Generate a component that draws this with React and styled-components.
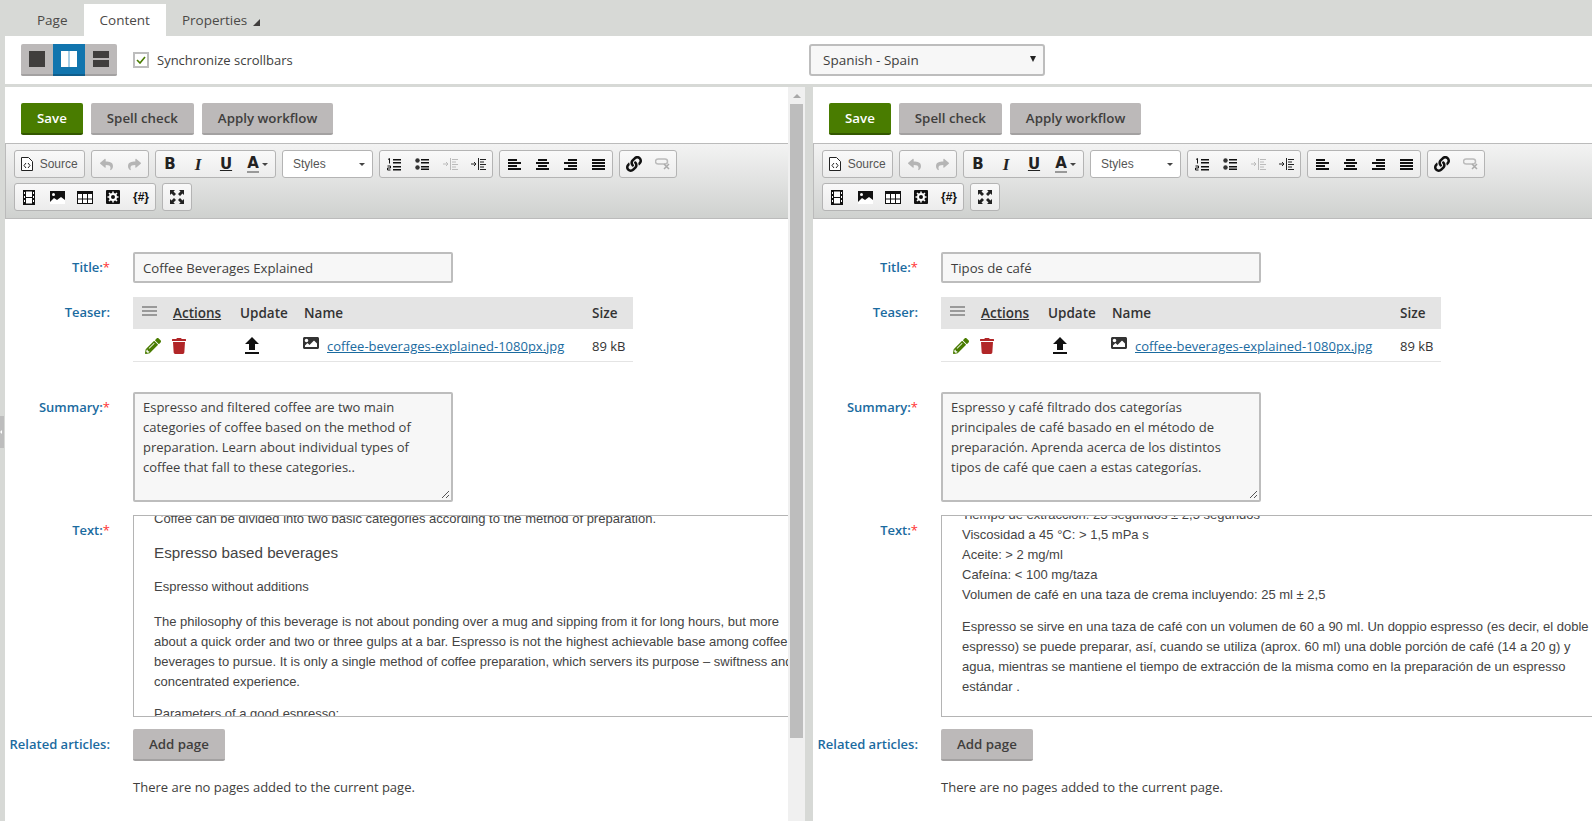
import React from 'react';
import styled, { createGlobalStyle } from 'styled-components';
import { FaPencilAlt, FaTrash, FaImage, FaReply, FaShare, FaLink } from 'react-icons/fa';
import { MdFileUpload } from 'react-icons/md';

const GlobalStyle = createGlobalStyle`
    html, body {
        margin: 0;
        height: 100%;
        overflow: hidden;
        background: #d7d9d6;
    }
    body {
        font-family: "Open Sans", "Liberation Sans", sans-serif;
        font-size: 13px;
        color: #403e3d;
    }
`

const Page = styled.div`
    width: 1592px;
    height: 821px;
    display: flex;
    flex-direction: column;
    overflow: hidden;
    position: relative;
`

const TabBar = styled.div`
    height: 32px;
    padding: 4px 0 0 21px;
    display: flex;
`

const Tab = styled.div`
    height: 32px;
    padding: 0 16px;
    display: flex;
    align-items: center;
    gap: 6px;
    font-size: 13.5px;
    background: ${p => (p.$active ? '#fff' : 'transparent')};
    color: #4b4947;
`

const TabCaret = styled.span`
    width: 0;
    height: 0;
    margin-top: 4px;
    border-left: 7px solid transparent;
    border-bottom: 7px solid #403e3d;
`

const ViewBar = styled.div`
    height: 48px;
    margin-left: 5px;
    background: #fff;
    display: flex;
    align-items: center;
    padding-left: 16px;
`

const ViewToggle = styled.div`
    width: 96px;
    height: 32px;
    display: flex;
    border-radius: 2px;
    overflow: hidden;
`

const ViewButton = styled.div`
    flex: 1;
    display: flex;
    align-items: center;
    justify-content: center;
    background: ${p => (p.$active ? '#1175ae' : '#bcb9b9')};
    border-bottom: 2px solid ${p => (p.$active ? '#0f5d8b' : '#a3a1a1')};
`

const ViewCheck = styled.label`
    display: flex;
    align-items: center;
    margin-left: 16px;
    width: 676px;
`

const CheckBox = styled.span`
    width: 12px;
    height: 12px;
    border: 2px solid #bdbdbd;
    margin-right: 8px;
    display: flex;
    align-items: center;
    justify-content: center;
`

const LanguageSelect = styled.div`
    width: 232px;
    height: 28px;
    border: 2px solid #bdbdbd;
    border-radius: 3px;
    background: #f7f7f7;
    display: flex;
    align-items: center;
    justify-content: space-between;
    font-size: 13.5px;
`

const SelectText = styled.span`
    margin-left: 12px;
`

const SelectCaret = styled.span`
    width: 0;
    height: 0;
    margin: -2px 7px 0 0;
    border-left: 3.5px solid transparent;
    border-right: 3.5px solid transparent;
    border-top: 6px solid #222;
`

const Main = styled.div`
    margin-top: 3px;
    margin-left: 5px;
    flex: 1;
    display: flex;
    min-height: 0;
`

const Panel = styled.div`
    width: ${p => p.$width}px;
    background: #fff;
    overflow: hidden;
    flex: none;
`

const ActionBar = styled.div`
    display: flex;
    gap: 8px;
    padding: 16px 0 8px 16px;
`

const Button = styled.div`
    height: 30px;
    padding: 0 16px;
    display: inline-flex;
    align-items: center;
    border-radius: 2px;
    font-size: 13.3px;
    font-weight: 600;
    background: ${p => (p.$primary ? '#497c00' : '#bcb9b9')};
    border-bottom: 2px solid ${p => (p.$primary ? '#335700' : '#a3a1a1')};
    color: ${p => (p.$primary ? '#fff' : '#403e3d')};
`

const Toolbar = styled.div`
    height: 62px;
    padding: 6px 0 6px 8px;
    display: flex;
    flex-direction: column;
    gap: 5px;
    border: 1px solid #bbb;
    border-right: 0;
    background: linear-gradient(#f3f3f3, #cfd1cf);
`

const ToolRow = styled.div`
    display: flex;
    gap: 6px;
    height: 28px;
`

const ToolGroup = styled.div`
    display: flex;
    height: 26px;
    border: 1px solid #b4b4b4;
    border-radius: 3px;
    background: linear-gradient(#f9f9f9, #ececec);
`

const ToolButton = styled.span`
    width: ${p => p.$w || 28}px;
    display: flex;
    align-items: center;
    justify-content: center;
    gap: 3px;
    color: ${p => (p.$off ? '#b5b5b5' : '#111')};
    font-family: "Liberation Sans", sans-serif;
    font-size: 12px;
`

const SourceLabel = styled.span`
    color: #555;
`

const FormatLetter = styled.span`
    font-family: ${p => (p.$italic ? '"Liberation Serif", serif' : '"DejaVu Sans", sans-serif')};
    font-size: ${p => (p.$italic ? 17 : 15)}px;
    line-height: 15px;
    font-weight: 700;
    font-style: ${p => (p.$italic ? 'italic' : 'normal')};
    text-decoration: ${p => (p.$under ? 'underline' : 'none')};
    border-bottom: ${p => (p.$bar ? '2px solid #999' : '0')};
    color: #222;
`

const DropCaret = styled.span`
    width: 0;
    height: 0;
    border-left: 3px solid transparent;
    border-right: 3px solid transparent;
    border-top: 3px solid #444;
`

const Combo = styled.div`
    padding: 0 7px 0 10px;
    box-sizing: border-box;
    width: 91px;
    height: 28px;
    display: flex;
    align-items: center;
    justify-content: space-between;
    border: 1px solid #b4b4b4;
    border-radius: 3px;
    background: #fff;
    font-family: "Liberation Sans", sans-serif;
    font-size: 12px;
    color: #555;
`

const MacroText = styled.span`
    font-family: "Liberation Sans", sans-serif;
    font-size: 12px;
    font-weight: 700;
    color: #111;
`

const Form = styled.div`
    padding-top: 33px;
`

const FormRow = styled.div`
    display: grid;
    grid-template-columns: 105px auto;
    column-gap: 23px;
    margin-bottom: ${p => p.$gap}px;
`

const Label = styled.div`
    padding-top: 5px;
    line-height: 20px;
    text-align: right;
    font-weight: 600;
    color: #1b6b9f;
    white-space: nowrap;
`

const Required = styled.span`
    color: #f33;
    font-weight: 400;
`

const TextInput = styled.div`
    width: 300px;
    height: 27px;
    padding: 0 8px;
    line-height: 28px;
    font-size: 13.2px;
    border: 2px solid #bdbdbd;
    border-radius: 2px;
    background: #f7f7f7;
`

const Table = styled.div`
    width: 500px;
`

const TableRow = styled.div`
    display: grid;
    grid-template-columns: 40px 67px 64px 288px 41px;
    align-items: center;
    height: 32px;
    box-sizing: content-box;
    white-space: nowrap;
    background: ${p => (p.$head ? '#e4e4e4' : '#fff')};
    border-bottom: ${p => (p.$head ? '0' : '1px solid #e4e4e4')};
    font-weight: ${p => (p.$head ? 600 : 400)};
    font-size: ${p => (p.$head ? 13.5 : 13)}px;
    color: #333;
`

const HandleCell = styled.div`
    padding-left: 9px;
    margin-top: -4px;
    display: flex;
    align-items: center;
`

const ActionsHead = styled.span`
    text-decoration: underline;
`

const IconCell = styled.div`
    display: flex;
    align-items: center;
    gap: ${p => p.$gap || 8}px;
    padding-left: ${p => p.$pad || 0}px;
    grid-column: span ${p => p.$span || 1};
    margin-top: 2px;
`

const FileIcon = styled(FaImage)`
    margin: -6px 0 0 -1px;
    flex: none;
`

const FileLink = styled.span`
    color: #1b6b9f;
    text-decoration: underline;
`

const SizeCell = styled.span`
    margin-top: 2px;
`

const SummaryBox = styled.div`
    width: 300px;
    height: 96px;
    padding: 3px 8px 7px;
    line-height: 20px;
    border: 2px solid #bdbdbd;
    border-radius: 2px;
    background: #f7f7f7;
    position: relative;
    white-space: nowrap;
`

const ResizeGrip = styled.svg`
    position: absolute;
    right: 1px;
    bottom: 1px;
`

const RichText = styled.div`
    height: 200px;
    width: 700px;
    border: 1px solid #b4b4b4;
    overflow: hidden;
    font-family: "Liberation Sans", sans-serif;
    font-size: 13px;
    line-height: 20px;
    color: #444;
    white-space: nowrap;
`

const RichScroll = styled.div`
    margin-top: ${p => p.$offset}px;
    padding-left: ${p => p.$indent}px;
`

const RichPara = styled.p`
    margin: 0 0 ${p => p.$gap || 12}px;
`

const RichHeading = styled.p`
    margin: 0 0 14px;
    font-size: 15.2px;
`

const EmptyNote = styled.div`
    margin-top: 16px;
    line-height: 20px;
`

const Track = styled.div`
    width: 17px;
    flex: none;
    background: #f0f0f0;
    display: flex;
    flex-direction: column;
    align-items: center;
`

const TrackArrow = styled.span`
    width: 0;
    height: 0;
    margin: 7px 0 6px;
    border-left: 4px solid transparent;
    border-right: 4px solid transparent;
    border-bottom: 4px solid #a8a8a8;
`

const TrackThumb = styled.div`
    width: 13px;
    height: 634px;
    background: #bdbdbd;
`

const Divider = styled.div`
    width: 8px;
    flex: none;
`

const SplitHandle = styled.div`
    position: absolute;
    left: 0;
    top: 416px;
    width: 4px;
    height: 32px;
    background: #bdbdbd;
    display: flex;
    align-items: center;
`

const SplitArrow = styled.span`
    width: 0;
    height: 0;
    border-top: 2px solid transparent;
    border-bottom: 2px solid transparent;
    border-right: 2px solid #fff;
`

const Bars = ({ rows, color = '#111', w = 13, h = 11, step = 3, t = 2 }) => (
    <svg width={w} height={h} viewBox={`0 0 ${w} ${h}`}>
        {rows.map((r, i) => (
            <rect key={i} x={r[0]} y={i * step} width={r[1]} height={t} fill={color} />
        ))}
    </svg>
)

const SourceIcon = () => (
    <svg width="12" height="14" viewBox="0 0 12 14">
        <path d="M.5.5h7l4 4v9H.5z" fill="#fff" stroke="#222" />
        <path d="M5 6L3 8.500 5 11M7 6l2 2.500L7 11" fill="none" stroke="#222" />
    </svg>
)

const NumberedIcon = () => (
    <svg width="14" height="13" viewBox="0 0 14 13">
        <path d="M1 1.500L2.500 .5v5M.5 8h3v2h-3v2h3" fill="none" stroke="#111" />
        <path d="M6 1h8v1.500H6zM6 4h8v1.500H6zM6 8h8v1.500H6zM6 11h8v1.500H6z" fill="#111" />
    </svg>
)

const BulletIcon = () => (
    <svg width="14" height="12" viewBox="0 0 14 12">
        <circle cx="2.500" cy="2.500" r="2.200" fill="#333" />
        <circle cx="2.500" cy="9.500" r="2.200" fill="#333" />
        <path d="M6 1h8v1.500H6zM6 4h8v1.500H6zM6 8h8v1.500H6zM6 10.500h8V12H6z" fill="#111" />
    </svg>
)

const IndentIcon = ({ color }) => (
    <svg width="15" height="12" viewBox="0 0 15 12">
        <path d="M7 0h1v12H7z" fill={color} />
        <path d="M0 6h4M3 4l2 2-2 2" fill="none" stroke={color} />
        <path d="M9 1h6v1H9zM9 3.500h4v1H9zM9 6h6v1H9zM9 8.500h4v1H9zM9 11h6v1H9z" fill={color} />
    </svg>
)

const UnlinkIcon = () => (
    <svg width="15" height="12" viewBox="0 0 15 12">
        <path d="M3 1h7a2.500 2.500 0 010 5H3a2.500 2.500 0 010-5z" fill="none" stroke="#bbb" strokeWidth="1.500" />
        <path d="M9 6l5 5M14 6l-5 5" fill="none" stroke="#aaa" strokeWidth="1.500" />
    </svg>
)

const FilmIcon = () => (
    <svg width="12" height="15" viewBox="0 0 12 15">
        <rect width="12" height="15" fill="#111" />
        <rect x="3" y="1.500" width="6" height="5.500" fill="#fff" />
        <rect x="3" y="8" width="6" height="5.500" fill="#fff" />
        <path d="M1 2h1v2H1zM1 6h1v2H1zM1 10h1v2H1zM10 2h1v2h-1zM10 6h1v2h-1zM10 10h1v2h-1z" fill="#fff" />
    </svg>
)

const ImageIcon = () => (
    <svg width="15" height="13" viewBox="0 0 15 13">
        <rect width="15" height="13" fill="#111" />
        <path d="M0 13v-2l4-4 3 2 4-3 4 3v4z" fill="#fff" />
        <circle cx="3.500" cy="3.500" r="1.500" fill="#fff" />
    </svg>
)

const TableIcon = () => (
    <svg width="16" height="13" viewBox="0 0 16 13">
        <rect x=".5" y=".5" width="15" height="12" fill="#fff" stroke="#111" />
        <rect width="16" height="3" fill="#111" />
        <path d="M5.500 3v10M10.500 3v10M0 8h16" stroke="#111" />
    </svg>
)

const GearIcon = () => (
    <svg width="14" height="14" viewBox="0 0 14 14">
        <rect width="14" height="14" rx="1" fill="#111" />
        <circle cx="7" cy="7" r="3" fill="none" stroke="#fff" strokeWidth="2" />
        <path d="M7 1.500v2M7 10.500v2M1.500 7h2M10.500 7h2M3 3l1.500 1.500M9.500 9.500L11 11M11 3L9.500 4.500M4.500 9.500L3 11" stroke="#fff" strokeWidth="1.500" />
    </svg>
)

const ExpandIcon = () => (
    <svg width="14" height="14" viewBox="0 0 14 14">
        <path d="M0 0h5L3.500 1.500 6 4 4 6 1.500 3.500 0 5zM14 0v5l-1.500-1.500L10 6 8 4l2.500-2.500L9 0zM0 14V9l1.500 1.500L4 8l2 2-2.500 2.500L5 14zM14 14H9l1.500-1.500L8 10l2-2 2.500 2.500L14 9z" fill="#222" />
    </svg>
)

const EditorToolbar = () => (
    <Toolbar>
        <ToolRow>
            <ToolGroup>
                <ToolButton $w={69}>
                    <SourceIcon />
                    <SourceLabel>&nbsp;Source</SourceLabel>
                </ToolButton>
            </ToolGroup>
            <ToolGroup>
                <ToolButton $off><FaReply size={13} /></ToolButton>
                <ToolButton $off><FaShare size={13} /></ToolButton>
            </ToolGroup>
            <ToolGroup>
                <ToolButton><FormatLetter>B</FormatLetter></ToolButton>
                <ToolButton><FormatLetter $italic>I</FormatLetter></ToolButton>
                <ToolButton><FormatLetter $under>U</FormatLetter></ToolButton>
                <ToolButton $w={35}><FormatLetter $bar>A</FormatLetter><DropCaret /></ToolButton>
            </ToolGroup>
            <Combo>Styles<DropCaret /></Combo>
            <ToolGroup>
                <ToolButton><NumberedIcon /></ToolButton>
                <ToolButton><BulletIcon /></ToolButton>
                <ToolButton><IndentIcon color="#bbb" /></ToolButton>
                <ToolButton><IndentIcon color="#222" /></ToolButton>
            </ToolGroup>
            <ToolGroup>
                <ToolButton><Bars rows={[[0, 9], [0, 13], [0, 9], [0, 13]]} /></ToolButton>
                <ToolButton><Bars rows={[[2, 9], [0, 13], [2, 9], [0, 13]]} /></ToolButton>
                <ToolButton><Bars rows={[[4, 9], [0, 13], [4, 9], [0, 13]]} /></ToolButton>
                <ToolButton><Bars rows={[[0, 13], [0, 13], [0, 13], [0, 13]]} /></ToolButton>
            </ToolGroup>
            <ToolGroup>
                <ToolButton><FaLink size={16} /></ToolButton>
                <ToolButton><UnlinkIcon /></ToolButton>
            </ToolGroup>
        </ToolRow>
        <ToolRow>
            <ToolGroup>
                <ToolButton><FilmIcon /></ToolButton>
                <ToolButton><ImageIcon /></ToolButton>
                <ToolButton><TableIcon /></ToolButton>
                <ToolButton><GearIcon /></ToolButton>
                <ToolButton><MacroText>{'{#}'}</MacroText></ToolButton>
            </ToolGroup>
            <ToolGroup>
                <ToolButton><ExpandIcon /></ToolButton>
            </ToolGroup>
        </ToolRow>
    </Toolbar>
)

const TeaserTable = () => (
    <Table>
        <TableRow $head>
            <HandleCell>
                <Bars rows={[[0, 15], [0, 15], [0, 15]]} color="#999" w={15} h={10} step={4} />
            </HandleCell>
            <ActionsHead>Actions</ActionsHead>
            <span>Update</span>
            <span>Name</span>
            <span>Size</span>
        </TableRow>
        <TableRow>
            <IconCell $pad={12} $span={2} $gap={10}>
                <FaPencilAlt size={16} color="#497c00" />
                <FaTrash size={16} color="#b12628" />
            </IconCell>
            <IconCell>
                <MdFileUpload size={24} color="#111" />
            </IconCell>
            <IconCell>
                <FileIcon size={16} color="#333" />
                <FileLink>coffee-beverages-explained-1080px.jpg</FileLink>
            </IconCell>
            <SizeCell>89 kB</SizeCell>
        </TableRow>
    </Table>
)

const EditorPanel = ({ width, content }) => (
    <Panel $width={width}>
        <ActionBar>
            <Button $primary>Save</Button>
            <Button>Spell check</Button>
            <Button>Apply workflow</Button>
        </ActionBar>
        <EditorToolbar />
        <Form>
            <FormRow $gap={14}>
                <Label>Title:<Required>*</Required></Label>
                <TextInput>{content.title}</TextInput>
            </FormRow>
            <FormRow $gap={30}>
                <Label>Teaser:</Label>
                <TeaserTable />
            </FormRow>
            <FormRow $gap={13}>
                <Label>Summary:<Required>*</Required></Label>
                <SummaryBox>
                    {content.summary.map(line => <div key={line}>{line}</div>)}
                    <ResizeGrip width="10" height="10" viewBox="0 0 10 10">
                        <path d="M9 2L2 9M9 6L6 9" stroke="#555" fill="none" />
                    </ResizeGrip>
                </SummaryBox>
            </FormRow>
            <FormRow $gap={12}>
                <Label>Text:<Required>*</Required></Label>
                <RichText>
                    <RichScroll $offset={content.offset} $indent={20}>
                        {content.text}
                    </RichScroll>
                </RichText>
            </FormRow>
            <FormRow $gap={0}>
                <Label>Related articles:</Label>
                <div>
                    <Button>Add page</Button>
                    <EmptyNote>There are no pages added to the current page.</EmptyNote>
                </div>
            </FormRow>
        </Form>
    </Panel>
)

const english = {
    title: 'Coffee Beverages Explained',
    summary: [
        'Espresso and filtered coffee are two main',
        'categories of coffee based on the method of',
        'preparation. Learn about individual types of',
        'coffee that fall to these categories..',
    ],
    offset: -7,
    text: (
        <>
            <RichPara $gap={14}>Coffee can be divided into two basic categories according to the method of preparation.</RichPara>
            <RichHeading>Espresso based beverages</RichHeading>
            <RichPara $gap={15}>Espresso without additions</RichPara>
            <RichPara>
                The philosophy of this beverage is not about ponding over a mug and sipping from it for long hours, but more<br />
                about a quick order and two or three gulps at a bar. Espresso is not the highest achievable base among coffee<br />
                beverages to pursue. It is only a single method of coffee preparation, which servers its purpose – swiftness and<br />
                concentrated experience.
            </RichPara>
            <RichPara>Parameters of a good espresso:</RichPara>
        </>
    ),
}

const spanish = {
    title: 'Tipos de café',
    summary: [
        'Espresso y café filtrado dos categorías',
        'principales de café basado en el método de',
        'preparación. Aprenda acerca de los distintos',
        'tipos de café que caen a estas categorías.',
    ],
    offset: -11,
    text: (
        <>
            <RichPara>
                Tiempo de extracción: 25 segundos ± 2,5 segundos<br />
                Viscosidad a 45 °C: &gt; 1,5 mPa s<br />
                Aceite: &gt; 2 mg/ml<br />
                Cafeína: &lt; 100 mg/taza<br />
                Volumen de café en una taza de crema incluyendo: 25 ml ± 2,5
            </RichPara>
            <RichPara>
                Espresso se sirve en una taza de café con un volumen de 60 a 90 ml. Un doppio espresso (es decir, el doble<br />
                espresso) se puede preparar, así, cuando se utiliza (aprox. 60 ml) una doble porción de café (14 a 20 g) y<br />
                agua, mientras se mantiene el tiempo de extracción de la misma como en la preparación de un espresso<br />
                estándar .
            </RichPara>
        </>
    ),
}

const App = () => (
    <Page>
        <GlobalStyle />
        <TabBar>
            <Tab>Page</Tab>
            <Tab $active>Content</Tab>
            <Tab>Properties<TabCaret /></Tab>
        </TabBar>
        <ViewBar>
            <ViewToggle>
                <ViewButton>
                    <svg width="16" height="16"><rect width="16" height="16" fill="#403e3d" /></svg>
                </ViewButton>
                <ViewButton $active>
                    <svg width="16" height="16">
                        <rect width="7" height="16" fill="#fff" />
                        <rect x="9" width="7" height="16" fill="#fff" />
                        <rect x="7" width="2" height="16" fill="#a9cfe6" />
                    </svg>
                </ViewButton>
                <ViewButton>
                    <svg width="16" height="16">
                        <rect width="16" height="7" fill="#403e3d" />
                        <rect y="9" width="16" height="7" fill="#403e3d" />
                    </svg>
                </ViewButton>
            </ViewToggle>
            <ViewCheck>
                <CheckBox>
                    <svg width="10" height="8" viewBox="0 0 10 8">
                        <path d="M1 4l3 3 5-6" fill="none" stroke="#497c00" strokeWidth="1.600" />
                    </svg>
                </CheckBox>
                Synchronize scrollbars
            </ViewCheck>
            <LanguageSelect>
                <SelectText>Spanish - Spain</SelectText>
                <SelectCaret />
            </LanguageSelect>
        </ViewBar>
        <Main>
            <EditorPanel width={783} content={english} />
            <Track>
                <TrackArrow />
                <TrackThumb />
            </Track>
            <Divider />
            <EditorPanel width={779} content={spanish} />
        </Main>
        <SplitHandle><SplitArrow /></SplitHandle>
    </Page>
)

export default App
